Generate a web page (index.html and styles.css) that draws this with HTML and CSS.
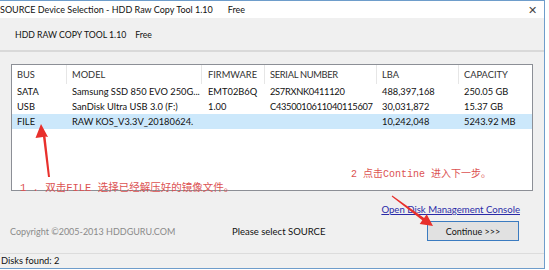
FILE: index.html
```html
<!DOCTYPE html>
<html lang="en-US"><head>
<meta charset="utf-8">
<meta name="viewport" content="width=device-width, initial-scale=1.0">
<link rel="stylesheet" href="styles.css">
<title>SOURCE Device Selection - HDD Raw Copy Tool 1.10</title>
</head><body>
<div class="window">
	<div class="titlebar">
		<span class="title">SOURCE Device Selection - HDD Raw Copy Tool 1.10<span class="gap"></span>Free</span>
		<span class="close">&#x2715;</span>
	</div>
	<div class="header">HDD RAW COPY TOOL 1.10<span class="gap"></span>Free</div>
	<div class="main">
		<div class="listview">
			<div class="lv-row lv-head">
				<span>BUS</span><span>MODEL</span><span>FIRMWARE</span><span>SERIAL NUMBER</span><span>LBA</span><span>CAPACITY</span>
			</div>
			<div class="lv-row">
				<span>SATA</span><span>Samsung SSD 850 EVO 250G...</span><span>EMT02B6Q</span><span>2S7RXNK0411120</span><span>488,397,168</span><span>250.05 GB</span>
			</div>
			<div class="lv-row">
				<span>USB</span><span>SanDisk Ultra USB 3.0 (F:)</span><span>1.00</span><span>C4350010611040115607</span><span>30,031,872</span><span>15.37 GB</span>
			</div>
			<div class="lv-row selected">
				<span>FILE</span><span>RAW KOS_V3.3V_20180624.</span><span></span><span></span><span>10,242,048</span><span>5243.92 MB</span>
			</div>
		</div>
	</div>
	<div class="link-row"><a class="link">Open Disk Management Console</a></div>
	<div class="action-row">
		<span class="copyright">Copyright ©2005-2013 HDDGURU.COM</span>
		<span class="prompt">Please select SOURCE</span>
		<button class="btn">Continue &gt;&gt;&gt;</button>
	</div>
	<div class="statusbar">Disks found: 2</div>

	<div class="note note-1">1 . 双击FILE 选择已经解压好的镜像文件。</div>
	<div class="note note-2">2 点击Contine 进入下一步。</div>
	<svg class="arrows" width="545" height="270" viewBox="0 0 545 270">
		<polygon points="41,124 48,137 45.5,136.5 50,177 48,177 43,137 35.5,138"/>
		<polygon points="433,226 426.7,214.2 424.1,217.9 392.3,195.6 391.7,196.4 422.3,220.3 419.7,224"/>
	</svg>
</div>
</body></html>
```
FILE: styles.css
```css
body {
	margin : 0 ;
	background : #ffffff ;
	font-family : "Lato", "Noto Sans", sans-serif ;
	font-size : 9px ;
	color : #111 ;
	}
.window {
	position : relative ;
	width : 545px ;
	box-sizing : border-box ;
	background : #f0f0f0 ;
	border : 1px solid #6e9dcb ;
	border-left : none ;
	}
.gap {
	display : inline-block ;
	width : 15px ;
	}
.titlebar {
	height : 17px ;
	background : #ffffff ;
	display : flex ;
	justify-content : space-between ;
	align-items : center ;
	font-size : 9px ;
	}
.close {
	font-size : 11px ;
	color : #444 ;
	padding-right : 7px ;
	}
.header {
	height : 32px ;
	display : flex ;
	align-items : center ;
	padding-left : 15px ;
	border-bottom : 2px solid #d9d9d9 ;
	font-size : 8.7px ;
	}
.header .gap {
	width : 9px ;
	}
.main {
	padding : 12px 0 0 11px ;
	}
.listview {
	width : 522px ;
	height : 127px ;
	box-sizing : border-box ;
	background : #ffffff ;
	border : 1px solid #8c8f96 ;
	font-size : 9.3px ;
	}
.lv-row {
	display : grid ;
	grid-template-columns : 55px 135px 63px 112px 82px 73px ;
	height : 15px ;
	line-height : 15px ;
	}
.lv-row span {
	padding-left : 5px ;
	white-space : nowrap ;
	overflow : hidden ;
	}
.lv-row span:nth-child(3) {
	padding-left : 6px ;
	}
.lv-row span:nth-child(4) {
	letter-spacing : -0.3px ;
	}
.lv-head {
	height : 19px ;
	line-height : 19px ;
	color : #333 ;
	}
.lv-head span {
	border-right : 1px solid #e6e6e6 ;
	}
.lv-head span:last-child {
	border-right : none ;
	}
.selected {
	background : #cce8fb ;
	}
.link-row {
	display : flex ;
	justify-content : flex-end ;
	padding : 12px 24px 0 0 ;
	height : 14px ;
	line-height : 14px ;
	font-size : 9.6px ;
	}
.link {
	color : #2b2ba8 ;
	text-decoration : underline ;
	}
.action-row {
	display : grid ;
	grid-template-columns : 222px 195px 92px ;
	align-items : center ;
	padding-left : 10px ;
	margin-top : 4px ;
	height : 20px ;
	}
.copyright {
	color : #8a8a8a ;
	}
.prompt {
	font-size : 9.5px ;
	}
.btn {
	height : 20px ;
	font : inherit ;
	color : #111 ;
	background : #e1e1e1 ;
	border : 1px solid #3b7bc0 ;
	padding : 0 ;
	}
.statusbar {
	margin-top : 12px ;
	border-top : 1px solid #dcdcdc ;
	height : 14px ;
	line-height : 14px ;
	padding-left : 1px ;
	font-size : 9.3px ;
	}
.note {
	position : absolute ;
	font-family : "Liberation Mono", "Noto Sans CJK SC", monospace ;
	font-size : 10.5px ;
	line-height : 14px ;
	color : #dc5252 ;
	white-space : nowrap ;
	}
.note-1 {
	left : 20px ;
	top : 180px ;
	}
.note-2 {
	left : 351px ;
	top : 167px ;
	font-size : 10px ;
	}
.arrows {
	position : absolute ;
	left : 0 ;
	top : -1px ;
	pointer-events : none ;
	fill : #e8302c ;
	}
```
